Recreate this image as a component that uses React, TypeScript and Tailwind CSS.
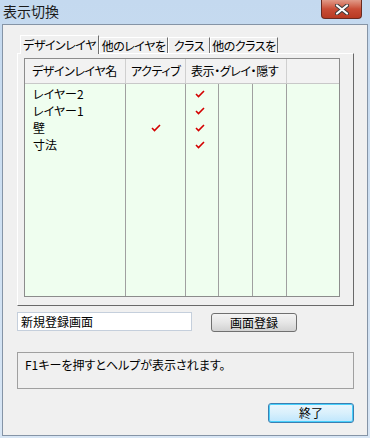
import React from 'react';

const font = { fontFamily: '"Noto Sans CJK JP", "Noto Sans", sans-serif' };

const rows = [
  { name: 'レイヤー2', active: false, show: true },
  { name: 'レイヤー1', active: false, show: true },
  { name: '壁', active: true, show: true },
  { name: '寸法', active: false, show: true },
];

function Check() {
  return (
    <svg width="10" height="8" viewBox="0 0 10 8" className="block">
      <path d="M1 4 L3.5 6.5 L9 1" fill="none" stroke="#d40000" strokeWidth="1.6" />
    </svg>
  );
}

function Tab({ label, w, active }: { label: string; w: string; active?: boolean }) {
  if (active) {
    return (
      <div className={`${w} h-[19px] -mb-px relative z-10 bg-[#f0f0f0] border border-b-0 border-t-white border-l-white border-r-[#707070] flex items-center justify-center text-[12px] leading-none tracking-[-0.5px] text-black whitespace-nowrap`}>
        {label}
      </div>
    );
  }
  return (
    <div className={`${w} h-[16px] bg-[#f0f0f0] border border-b-0 border-t-white border-l-white border-r-[#707070] flex items-center justify-center text-[12px] leading-none tracking-[-0.5px] text-black whitespace-nowrap`}>
      {label}
    </div>
  );
}

export default function App() {
  return (
    <div style={font} className="w-[370px] h-[438px] bg-gradient-to-b from-[#c4d9ef] to-[#d8e6f5] flex flex-col overflow-hidden [font-feature-settings:'palt']">
      {/* title bar */}
      <div className="h-[24px] flex items-start justify-between shrink-0">
        <span className="pl-[3px] pt-[3px] text-[14px] leading-[16px] text-[#1a1a1a]">表示切換</span>
        <div className="mr-[8px] w-[41px] h-[19px] rounded-b-[4px] border border-t-0 border-[#6a2a20] bg-gradient-to-b from-[#e09a88] via-[#c94d36] to-[#b83a22] flex items-center justify-center">
          <svg width="14" height="11" viewBox="0 0 14 11">
            <path d="M2 1.5 L12 9.5 M12 1.5 L2 9.5" stroke="#3a3a3a" strokeWidth="4" strokeLinecap="round" />
            <path d="M2 1.5 L12 9.5 M12 1.5 L2 9.5" stroke="#ffffff" strokeWidth="2.2" strokeLinecap="round" />
          </svg>
        </div>
      </div>

      {/* client */}
      <div className="mx-[2px] mb-[2px] flex-1 border border-[#8594a6] bg-[#f0f0f0] pl-[14px] pr-[13px] pt-[9px] text-[12px] text-black">
        {/* tabs */}
        <div className="flex items-end pl-[3px] h-[19px]">
          <Tab label="デザインレイヤ" w="w-[79px]" active />
          <Tab label="他のレイヤを" w="w-[69px]" />
          <Tab label="クラス" w="w-[42px]" />
          <Tab label="他のクラスを" w="w-[68px]" />
        </div>

        {/* tab panel */}
        <div className="h-[253px] border border-t-white border-l-white border-r-[#696969] border-b-[#696969] pl-[6px] pr-[13px] pt-[4px] pb-[8px]">
          <div className="h-full border border-[#8c8c8c] bg-[#effeef] flex flex-col">
            <div className="h-[25px] bg-[#f2f2f2] border-b border-[#c8c8c8] flex text-[12px] leading-none tracking-[-0.4px] shrink-0 whitespace-nowrap">
              <div className="w-[101px] border-r border-[#cfcfcf] pl-[7px] flex items-center">デザインレイヤ名</div>
              <div className="w-[60px] border-r border-[#cfcfcf] pl-[5px] flex items-center">アクティブ</div>
              <div className="w-[101px] border-r border-[#cfcfcf] pl-[5px] flex items-center">表示・グレイ・隠す</div>
              <div className="flex-1" />
            </div>
            <div className="flex-1 flex">
              <div className="w-[101px] border-r border-[#a0a0a0] pl-[8px] pt-[1px]">
                {rows.map(r => (
                  <div key={r.name} className="h-[17px] flex items-center leading-none">{r.name}</div>
                ))}
              </div>
              <div className="w-[60px] border-r border-[#a0a0a0] pt-[1px]">
                {rows.map(r => (
                  <div key={r.name} className="h-[17px] flex items-center justify-center pl-[1px]">{r.active && <Check />}</div>
                ))}
              </div>
              <div className="w-[33px] border-r border-[#a0a0a0] pt-[1px]">
                {rows.map(r => (
                  <div key={r.name} className="h-[17px] flex items-center justify-center pr-[4px]">{r.show && <Check />}</div>
                ))}
              </div>
              <div className="w-[34px] border-r border-[#a0a0a0]" />
              <div className="w-[34px] border-r border-[#a0a0a0]" />
              <div className="flex-1" />
            </div>
          </div>
        </div>

        {/* name + register */}
        <div className="flex items-start mt-[6px] h-[19px]">
          <div className="w-[175px] h-[19px] bg-white border border-[#c5cfdc] pl-[3px] flex items-center leading-none">新規登録画面</div>
          <button className="ml-[19px] mt-[1px] w-[86px] h-[19px] rounded-[3px] border border-[#707070] bg-gradient-to-b from-[#f4f4f4] via-[#e6e6e6] to-[#d2d2d2] flex items-center justify-center leading-none text-black">画面登録</button>
        </div>

        {/* help box */}
        <div className="mt-[21px] h-[37px] border border-[#a0a0a0] pl-[7px] pt-[4px] leading-[16px]">
          F1キーを押すとヘルプが表示されます。
        </div>

        {/* close */}
        <div className="flex justify-end mt-[14px]">
          <button className="w-[86px] h-[20px] rounded-[3px] border border-[#3c7fb1] bg-gradient-to-b from-[#eaf6fd] via-[#d9f0fc] to-[#bee6fd] shadow-[inset_0_0_0_1px_#48d0fc] flex items-center justify-center leading-none text-black">終了</button>
        </div>
      </div>
    </div>
  );
}
